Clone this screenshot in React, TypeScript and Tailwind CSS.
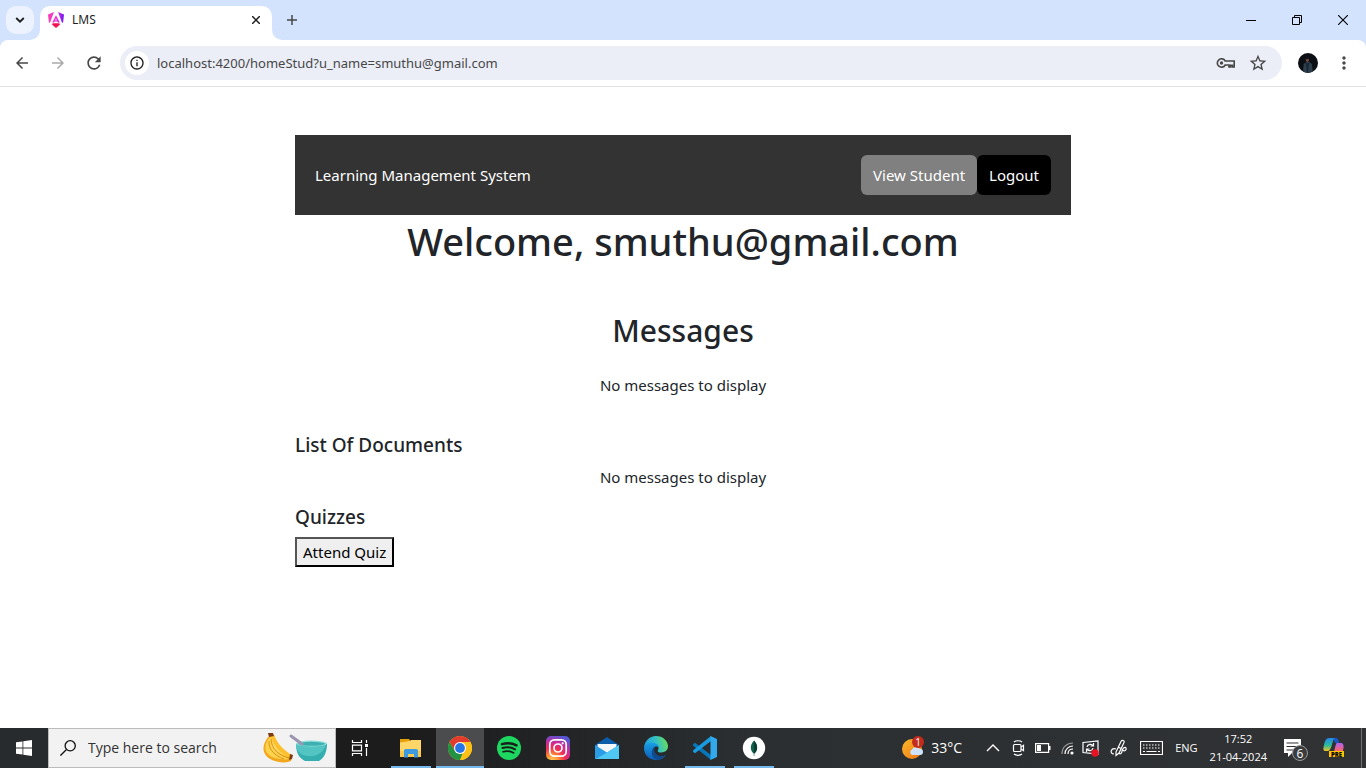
import React from "react";
import { MdArrowBack, MdArrowForward, MdRefresh, MdStarBorder, MdMoreVert, MdInfoOutline } from "react-icons/md";

function AngularLogo() {
  return (
    <svg width="16" height="16" viewBox="0 0 16 16" aria-hidden="true">
      <defs>
        <linearGradient id="ng" gradientUnits="userSpaceOnUse" x1="0" y1="0" x2="16" y2="0">
          <stop offset="0" stopColor="#fb3fb0" />
          <stop offset="0.55" stopColor="#e52fe0" />
          <stop offset="1" stopColor="#6a1cf0" />
        </linearGradient>
      </defs>
      <path fill="url(#ng)" d="M0 2.600 6 0 2 10.800.9 10.400zM16 2.600 10 0l4 10.800 1.100-.4zM8 3.200l3.800 7.400H9.900l-.6-1.200H6.700l-.6 1.200H4.200z" />
      <path fill="#fff" d="M8 6.400 8.900 8.300H7.100z" />
      <path fill="#f5104f" d="M4 12.600 4.700 11.200h6.600l.7 1.400L8 16z" />
    </svg>
  );
}

function KeyIcon() {
  return (
    <svg width="20" height="20" viewBox="0 0 20 20" fill="none" stroke="#474747" strokeWidth="1.600" aria-hidden="true">
      <path d="M9.200 8H18.200V14H16.400V12.400H14.600V14H13V12H9.200A4.200 4.200 0 1 1 9.200 8z" />
      <circle cx="5.500" cy="10" r="1.700" fill="#474747" stroke="none" />
    </svg>
  );
}

function Avatar() {
  return (
    <svg width="20" height="20" viewBox="0 0 20 20" aria-hidden="true">
      <circle cx="10" cy="10" r="10" fill="#0b0e13" />
      <path fill="#2c3d4c" d="M5 18.500 5.700 11 8.500 9h2.600l2.800 2 .8 7.200a10 10 0 0 1-9.700.3z" />
      <path fill="#1a2733" d="m8 10 1 9h1l1-9z" />
      <ellipse cx="9.400" cy="6.600" rx="1.700" ry="2.300" fill="#7a5040" />
      <path fill="#11151b" d="M7.300 6.200c0-3.600 4.600-3.600 4.400 0z" />
    </svg>
  );
}

function Bananas() {
  return (
    <svg width="66" height="32" viewBox="0 0 66 32" aria-hidden="true">
      <path fill="#f2a71b" d="M8 3C-1 12-1 23 10 28c7 3 15 3 19 1l1-5C21 20 15 13 12 3z" />
      <path fill="#ffd34d" d="M8 5C1 13 2 21 10 25c6 2 12 3 17 2C18 22 12 16 10 6z" />
      <path fill="#ffc02e" d="M9 4c1 12 8 19 18 22l3-3C23 19 16 13 12 3z" />
      <path fill="#ffe07a" d="M10 7c2 8 8 14 15 17-8-2-15-8-15-17z" />
      <path fill="none" stroke="#d6880f" strokeWidth=".9" d="M9 7c0 9 8 17 18 19M7 9c-1 8 6 15 15 18" />
      <path fill="#7a3b12" d="M6 1h5l1 3-5 1zM28 22l3 1-1 4-3 1z" />
      <path fill="#35aeb0" d="M34 12c0 9 3 14 9 17h14c5-3 8-9 8-17z" />
      <path fill="#5fcdca" d="M34 12c0 7 4 11 11 12 9 1 17-3 19-12z" opacity=".7" />
      <ellipse cx="49.500" cy="11.500" rx="15.500" ry="3" fill="#8ee0dc" />
      <ellipse cx="49.500" cy="11.800" rx="13.500" ry="2" fill="#3fb0b2" />
      <path stroke="#9b95b0" strokeWidth="3" strokeLinecap="round" d="m29 4 11 8" />
    </svg>
  );
}

const svgProps = { width: 24, height: 24, viewBox: "0 0 24 24", "aria-hidden": true } as const;

const TaskView = () => (
  <svg width="18" height="16" viewBox="0 0 18 16" fill="none" stroke="#fff" strokeWidth="1.200" aria-hidden="true">
    <path d="M1.500 0v2.500h9V0M1.500 16v-2.500h9V16M1.500 5.100h9v5.800h-9zM15.500 0v3M15.500 8v8" />
    <path fill="#fff" stroke="none" d="M14 4h3v3h-3z" />
  </svg>
);

const Explorer = () => (
  <svg {...svgProps}>
    <path fill="#e3a008" d="M1 3h9l1.500 2V8H1z" />
    <path fill="#ffd667" d="M1 6.500 11 5l1-1h10v17H1z" />
    <path fill="#f9c94e" d="M1 15h21v6H1z" />
    <path fill="#3f9be0" d="M5 21.500V14l1.500-1h11l1.500 1v7.500h-4V18H9v3.500z" />
  </svg>
);

const Chrome = () => (
  <svg {...svgProps}>
    <circle cx="12" cy="12" r="12" fill="#fbc116" />
    <path fill="#e33b2e" d="M12 0a12 12 0 0 1 10.400 6H12L6.800 15 1.600 6A12 12 0 0 1 12 0z" />
    <path fill="#229342" d="m1.600 6 5.200 9 5.200 3 2.500-.6L12 24A12 12 0 0 1 1.600 6z" />
    <path fill="#fbc116" d="M12 6h10.400A12 12 0 0 1 12 24l5.200-9z" />
    <circle cx="12" cy="12" r="6" fill="#fff" />
    <circle cx="12" cy="12" r="4.900" fill="#2675e6" />
  </svg>
);

const Spotify = () => (
  <svg {...svgProps} fill="none">
    <circle cx="12" cy="12" r="12" fill="#1ed760" />
    <g stroke="#17201a" strokeLinecap="round">
      <path strokeWidth="2.500" d="M5 8.100c5-1.500 10.500-1 14.500 1.300" />
      <path strokeWidth="2.100" d="M5.500 12c4.300-1.200 9-.8 12.500 1.300" />
      <path strokeWidth="1.700" d="M6 15.700c3.800-1 7.600-.6 10.700 1.200" />
    </g>
  </svg>
);

const Instagram = () => (
  <svg {...svgProps} fill="none">
    <defs>
      <radialGradient id="ig" cx=".25" cy="1.050" r="1.100">
        <stop offset="0" stopColor="#ffd75e" />
        <stop offset=".25" stopColor="#fd8d32" />
        <stop offset=".5" stopColor="#f22c55" />
        <stop offset=".75" stopColor="#c52d9e" />
        <stop offset="1" stopColor="#5657d5" />
      </radialGradient>
    </defs>
    <rect width="24" height="24" rx="5" fill="url(#ig)" />
    <rect x="3.800" y="3.800" width="16.400" height="16.400" rx="4.600" stroke="#fff" strokeWidth="1.700" />
    <circle cx="12" cy="12" r="4" stroke="#fff" strokeWidth="1.700" />
    <circle cx="16.700" cy="7.300" r="1.100" fill="#fff" />
  </svg>
);

const Mail = () => (
  <svg {...svgProps}>
    <path fill="#0b5cab" d="M0 9 12 1l12 8v3H0z" />
    <path fill="#f4f7fa" d="M2.500 8h19v5l-9 6-10-6z" />
    <path fill="#2a9de5" d="m0 9 12 7.500L24 9v14H0z" />
    <path fill="#50c8f4" d="M24 9v14H1l11-6.500z" />
  </svg>
);

const Edge = () => (
  <svg {...svgProps}>
    <defs>
      <linearGradient id="ea" x1="0" y1=".4" x2="1" y2=".2">
        <stop offset="0" stopColor="#1b9de2" />
        <stop offset=".5" stopColor="#35c1c5" />
        <stop offset="1" stopColor="#6be052" />
      </linearGradient>
      <linearGradient id="eb" x1="0" y1="0" x2="0" y2="1">
        <stop offset="0" stopColor="#199ee5" />
        <stop offset="1" stopColor="#0c5bb5" />
      </linearGradient>
    </defs>
    <path fill="url(#ea)" d="M0 12C.4 5 5.400 0 12 0c7 0 12 5 12 10.300 0 4.200-3.300 6.200-6.500 6.200-2.800 0-4.300-1-3.700-2.100C16 11 13.500 7.500 9 7.500 4 7.500 1 9.700 0 12z" />
    <path fill="url(#eb)" d="M0 12c.7-3.300 4-5.300 7.700-5.300 4.500 0 7.300 2.500 7.300 5.300-1-1.500-2.600-2-4-1.300-2.800 1.500-3 7 2.500 9.300 3.400 1.400 6.700.3 8.400-1.100C19.500 22.600 16 24 12 24 4.800 24 0 18.800 0 12z" />
    <path fill="#114a8b" d="M11 10.700c-4 1.800-5.500 10.300 2.500 13.200 3.600-.2 6.600-2 8.700-5.200-3.700 2-8 1.700-10.300-1-1.700-2-1.800-5-.9-7z" />
  </svg>
);

const VsCode = () => (
  <svg {...svgProps}>
    <path fill="#0877b9" d="m0 8.300 2-1.600 16 12.200V24L.2 9.700z" />
    <path fill="#199be2" d="m0 15.700 2 1.600L18 5.100V0L.2 14.300z" />
    <path fill="#32a9ed" d="m17.500 0 6.500 3v18l-6.500 3z" />
  </svg>
);

const Mongo = () => (
  <svg {...svgProps}>
    <circle cx="12" cy="12" r="11.200" fill="#fff" />
    <path fill="#116149" d="M12 4.500c-5 5.300-3.300 10.500-.3 13V20h.6v-2.500c3.200-2.500 4.500-7.800-.3-13z" />
    <path fill="#0b3d32" d="M12 4.500c4.800 5.200 3.500 10.500.3 13H12z" />
  </svg>
);

const apps = [
  { name: "File Explorer", Icon: Explorer, open: true, active: false },
  { name: "Google Chrome", Icon: Chrome, open: true, active: true },
  { name: "Spotify", Icon: Spotify, open: false, active: false },
  { name: "Instagram", Icon: Instagram, open: false, active: false },
  { name: "Mail", Icon: Mail, open: false, active: false },
  { name: "Microsoft Edge", Icon: Edge, open: false, active: false },
  { name: "Visual Studio Code", Icon: VsCode, open: true, active: false },
  { name: "MongoDB Compass", Icon: Mongo, open: true, active: false },
];

const trayProps = { fill: "none", stroke: "#fff", strokeWidth: 1.2, "aria-hidden": true } as const;

function BrowserHeader() {
  return (
    <header className="shrink-0">
      <div className="flex h-10 items-stretch bg-[#d3e3fd]">
        <button aria-label="Search tabs" className="ml-1.5 mt-1.5 flex size-7 items-center justify-center rounded-[10px] bg-[#ecf3fe]">
          <svg width="10" height="6" viewBox="0 0 10 6" fill="none" stroke="#1f1f1f" strokeWidth="1.900" aria-hidden="true">
            <path d="m1.200 1 3.800 3.600L8.800 1" />
          </svg>
        </button>
        <div className="relative ml-1.5 mt-1.5 flex w-58 items-center rounded-t-[10px] bg-white pb-1.5 pl-2 pr-2.5">
          <svg className="absolute -left-2.5 bottom-0" width="10" height="10" viewBox="0 0 10 10" aria-hidden="true">
            <path fill="#fff" d="M10 0v10H0A10 10 0 0 0 10 0z" />
          </svg>
          <svg className="absolute -right-2.5 bottom-0" width="10" height="10" viewBox="0 0 10 10" aria-hidden="true">
            <path fill="#fff" d="M0 0v10h10A10 10 0 0 1 0 0z" />
          </svg>
          <AngularLogo />
          <span className="ml-2 flex-1 text-xs text-[#1f1f1f]">LMS</span>
          <button aria-label="Close tab" className="flex size-3 items-center justify-center">
            <svg width="8" height="8" viewBox="0 0 8 8" stroke="#1f1f1f" strokeWidth="1.500" aria-hidden="true">
              <path d="m0 0 8 8M8 0 0 8" />
            </svg>
          </button>
        </div>
        <button aria-label="New tab" className="ml-3.5 flex w-3 items-center justify-center">
          <svg width="10" height="10" viewBox="0 0 10 10" stroke="#474747" strokeWidth="1.500" aria-hidden="true">
            <path d="M5 0v10M0 5h10" />
          </svg>
        </button>
        <div className="ml-auto flex">
          <button aria-label="Minimize" className="flex w-[46px] items-center justify-center">
            <svg width="10" height="10" viewBox="0 0 10 10" aria-hidden="true"><path fill="#000" d="M0 5h10v1H0z" /></svg>
          </button>
          <button aria-label="Restore" className="flex w-[46px] items-center justify-center">
            <svg width="10" height="10" viewBox="0 0 10 10" fill="none" stroke="#000" aria-hidden="true">
              <path d="M.5 2.500h7v7h-7zM2.500 2.500v-2h7v7h-2" />
            </svg>
          </button>
          <button aria-label="Close" className="flex w-[46px] items-center justify-center">
            <svg width="10" height="10" viewBox="0 0 10 10" stroke="#000" strokeWidth="1.100" aria-hidden="true">
              <path d="m0 0 10 10M10 0 0 10" />
            </svg>
          </button>
        </div>
      </div>
      <div className="bg-[#d3e3fd]">
        <div className="flex h-[47px] items-center rounded-t-lg border-b border-[#dfe1e5] bg-white pl-3 pr-3 text-[#474747]">
          <button aria-label="Back"><MdArrowBack size={20} className="block p-px" /></button>
          <button aria-label="Forward" className="ml-4 text-[#aaaaaa]"><MdArrowForward size={20} className="block p-px" /></button>
          <button aria-label="Reload" className="ml-4"><MdRefresh size={20} className="block" /></button>
          <div className="ml-4 flex h-[34px] flex-1 items-center rounded-full bg-[#ebeef7] pl-[5px] pr-3.5">
            <button aria-label="Site information" className="flex size-6 items-center justify-center rounded-full bg-white text-[#1f1f1f]">
              <MdInfoOutline size={16} />
            </button>
            <input
              aria-label="Address"
              defaultValue="localhost:4200/homeStud?u_name=smuthu@gmail.com"
              className="ml-2 h-6 min-w-0 flex-1 bg-transparent text-[13px] text-[#474747] outline-none"
            />
            <button aria-label="Manage passwords"><KeyIcon /></button>
            <button aria-label="Bookmark this tab" className="ml-3"><MdStarBorder size={20} /></button>
          </div>
          <button aria-label="Profile" className="ml-4"><Avatar /></button>
          <button aria-label="Chrome menu" className="ml-4"><MdMoreVert size={20} /></button>
        </div>
      </div>
    </header>
  );
}

function HomePage() {
  return (
    <main className="flex-1 bg-white pt-12 text-[#212529]">
      <div className="mx-auto w-full max-w-[776px]">
        <nav className="flex items-center justify-between bg-[#333333] p-5 text-[15px] text-white">
          <span>Learning Management System</span>
          <div className="flex">
            <button className="h-10 rounded-md bg-[#808080] px-3">View Student</button>
            <button className="h-10 rounded-md bg-black px-3">Logout</button>
          </div>
        </nav>
        <h1 className="text-center text-[38px] leading-[52px] font-medium">Welcome, smuthu@gmail.com</h1>
        <section className="mt-11 text-center">
          <h2 className="text-[30px] leading-10 font-medium">Messages</h2>
          <p className="mt-[22px] text-[15px] leading-6">No messages to display</p>
        </section>
        <section className="mt-9">
          <h5 className="text-[19px] leading-6 font-medium">List Of Documents</h5>
          <p className="mt-2 text-center text-[15px] leading-6">No messages to display</p>
        </section>
        <section className="mt-4">
          <h5 className="text-[19px] leading-6 font-medium">Quizzes</h5>
          <button className="mt-2 h-[30px] border-2 border-t-[#555555] border-l-[#555555] border-r-black border-b-black bg-[#efefef] px-1.5 text-[15px] leading-6 text-black">
            Attend Quiz
          </button>
        </section>
      </div>
    </main>
  );
}

function Taskbar() {
  return (
    <footer className="flex h-10 shrink-0 items-stretch bg-linear-to-r from-[#1c1c1d] from-30% via-[#2b2f31] via-55% to-[#303234] text-white">
      <button aria-label="Start" className="flex w-12 items-center justify-center bg-[#282b2d]">
        <svg width="16" height="16" viewBox="0 0 16 16" fill="#fff" aria-hidden="true">
          <path d="M0 2.300 6.500 1.400v6.200H0zM7.300 1.300 16 0v7.600H7.300zM0 8.400h6.500v6.200L0 13.700zM7.300 8.400H16V16l-8.700-1.300z" />
        </svg>
      </button>
      <label className="flex w-72 items-center border border-[#bcbcbc] bg-[#f2f2f2] pl-[11px] pr-[7px]">
        <svg width="16" height="16" viewBox="0 0 16 16" fill="none" stroke="#111" strokeWidth="1.300" aria-hidden="true">
          <circle cx="10.200" cy="5.800" r="5.100" />
          <path d="M6.500 9.500.4 15.600" />
        </svg>
        <input aria-label="Search" placeholder="Type here to search" className="ml-3 min-w-0 flex-1 bg-transparent font-['Open_Sans',sans-serif] text-sm text-[#333333] outline-none placeholder:text-[#333333]" />
        <Bananas />
      </label>
      <button aria-label="Task View" className="flex w-12 items-center justify-center"><TaskView /></button>
      <div className="ml-[3px] flex gap-px">
        {apps.map(({ name, Icon, open, active }) => (
          <button key={name} aria-label={name} className={active ? "relative flex w-12 items-center justify-center bg-[#4b4c4d]" : "relative flex w-12 items-center justify-center"}>
            <Icon />
            {open && <span className={active ? "absolute inset-x-0 bottom-0 h-0.5 bg-[#76b9ed]" : "absolute inset-x-1 bottom-0 h-0.5 bg-[#76b9ed]"} />}
          </button>
        ))}
      </div>
      <div className="ml-auto flex items-center font-['Open_Sans',sans-serif]">
        <button className="flex items-center gap-1.5 text-sm">
          <svg width="24" height="24" viewBox="0 0 24 24" aria-hidden="true">
            <defs>
              <linearGradient id="sun" x1="0" y1="0" x2="1" y2="1">
                <stop offset="0" stopColor="#fdb92a" />
                <stop offset="1" stopColor="#ec7415" />
              </linearGradient>
            </defs>
            <circle cx="11" cy="13" r="10" fill="url(#sun)" />
            <path fill="#cfe2fb" d="M11 19a3 3 0 0 1 0-5.500 4.500 4.500 0 0 1 7.500-.8 3.300 3.300 0 0 1 3.500 3.300 3 3 0 0 1-3 3z" />
            <circle cx="17" cy="6" r="6" fill="#c42b1c" />
            <text x="17" y="9.500" textAnchor="middle" fontSize="10" fill="#fff">1</text>
          </svg>
          <span>33°C</span>
        </button>
        <button aria-label="Show hidden icons" className="ml-6">
          <svg width="14" height="14" viewBox="0 0 14 14" {...trayProps} strokeWidth={1.4}><path d="m1 10 6-6 6 6" /></svg>
        </button>
        <button aria-label="Meet Now" className="ml-3">
          <svg width="13" height="16" viewBox="0 0 13 16" {...trayProps}>
            <rect x="1.500" y="4.500" width="7.500" height="7" rx="1" />
            <path d="m9 7 2.500-1.700v5.400L9 9M2 2c2-1.700 6-1.700 8 0M2 14c2 1.700 6 1.700 8 0" />
          </svg>
        </button>
        <button aria-label="Battery" className="ml-2.5">
          <svg width="16" height="10" viewBox="0 0 16 10" {...trayProps}>
            <path d="M.6.600h13v8.800H.6z" />
            <path fill="#fff" stroke="none" d="M2 2h4v6H2zM14 3h1.500v4H14z" />
          </svg>
        </button>
        <button aria-label="Network" className="ml-2.5">
          <svg width="13" height="14" viewBox="0 0 13 14" {...trayProps}>
            <path opacity=".5" d="M1 13C1 6 6 2 12 2" />
            <path d="M4 13c0-5 4-8 8-8M7 13c0-3 2-5 5-5" />
            <circle cx="11" cy="12" r="1.600" fill="#fff" stroke="none" />
          </svg>
        </button>
        <button aria-label="Windows Update" className="ml-2">
          <svg width="18" height="18" viewBox="0 0 18 18" {...trayProps}>
            <path d="M1 3.500 16 2v13L1 13.500z" />
            <path d="M5 8c.5-3 5-3.500 6-1M11.500 4v3h-3M11 9c-.5 3-5 3.500-6 1M4.500 13v-3h3" />
            <circle cx="13" cy="14" r="3.700" fill="#e81224" stroke="none" />
          </svg>
        </button>
        <button aria-label="Windows Ink" className="ml-2.5">
          <svg width="18" height="18" viewBox="0 0 18 18" {...trayProps}>
            <path d="M6 13 11 2.500c1-2 4-1 3 1L9 14l-3 2.500zM6 10c-5-1.500-7 4.500-2 5M9 14c1 2 3 0 3-2s3-5 4-3-2 4-3 2M8 8l3 1.500" />
          </svg>
        </button>
        <button aria-label="Touch keyboard" className="ml-3">
          <svg width="23" height="14" viewBox="0 0 23 14" {...trayProps}>
            <path d="M.5.500h22v13H.5z" />
            <path strokeDasharray="1.500 1.500" d="M3 4h17M3 7h17" />
            <path d="M3 10.500h2M6.500 10.500h10M18 10.500h2" />
          </svg>
        </button>
        <button className="ml-3 text-[11px]">ENG</button>
        <button className="ml-3 text-center text-[11px] leading-[18px]">
          <span className="block">17:52</span>
          <span className="block">21-04-2024</span>
        </button>
        <button aria-label="Notifications" className="ml-4">
          <svg width="26" height="26" viewBox="0 0 26 26" aria-hidden="true">
            <path fill="#fff" d="M1 4h17v14H9l-4 4v-4H1z" />
            <path stroke="#2d2f31" strokeWidth="1.200" d="M3.500 8h12M3.500 11.500h12M3.500 15h7" />
            <circle cx="17" cy="18" r="7.500" fill="#3a3c3e" stroke="#98999a" />
            <text x="17" y="22.500" textAnchor="middle" fontSize="12" fill="#fff">6</text>
          </svg>
        </button>
        <button aria-label="Copilot" className="ml-3.5">
          <svg width="22" height="20" viewBox="0 0 22 20" aria-hidden="true">
            <defs>
              <linearGradient id="ca" x1="0" y1="0" x2="0" y2="1">
                <stop offset="0" stopColor="#2387ed" />
                <stop offset=".55" stopColor="#29bb9e" />
                <stop offset="1" stopColor="#f0c820" />
              </linearGradient>
              <linearGradient id="cb" x1="0" y1="0" x2="0" y2="1">
                <stop offset="0" stopColor="#ad63f5" />
                <stop offset=".6" stopColor="#f2637d" />
                <stop offset="1" stopColor="#ff9e43" />
              </linearGradient>
            </defs>
            <path fill="url(#cb)" d="M14 5h4c2 0 3 2 2.500 5s-1.500 6-4 6H9c3 0 3-11 5-11z" />
            <path fill="#1b55c8" d="M10 0h3c2 0 2.500 2 3 5h-3c-2 0-2-5-3-5z" />
            <path fill="url(#ca)" d="M6 0h6c-3 1-3 13-7 13H3c-3 0-3-2-2-6s2-7 5-7z" />
            <path fill="#ffc400" d="M6 13h15v6H6z" />
            <text x="13.500" y="18.500" textAnchor="middle" fontSize="6" fontWeight="800" fill="#000">PRE</text>
          </svg>
        </button>
        <span className="ml-4 mr-1 h-10 w-px bg-[#6d6f70]" />
      </div>
    </footer>
  );
}

export default function App() {
  return (
    <div className="flex min-h-screen flex-col font-['Noto_Sans','Open_Sans',sans-serif]">
      <BrowserHeader />
      <HomePage />
      <Taskbar />
    </div>
  );
}
